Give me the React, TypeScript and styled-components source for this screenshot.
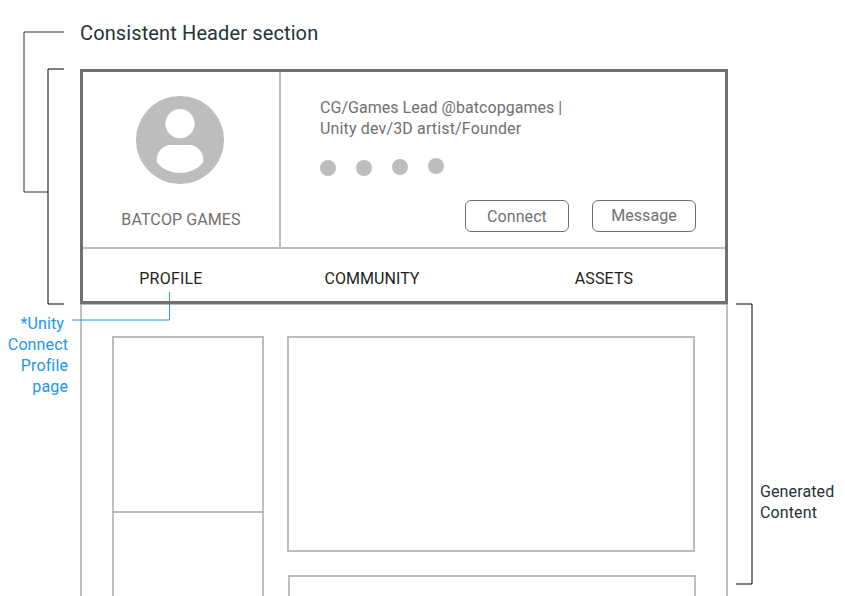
import React from "react";
import styled, { createGlobalStyle } from "styled-components";

const ink = "#263238";
const dark = "#707070";
const light = "#bdbdbd";
const blue = "#2196f3";

const GlobalStyle = createGlobalStyle`
  *, *::before, *::after { box-sizing: border-box; }
  html, body { margin: 0; background: #fff; }
  body { font: 16px/21px Roboto, "Liberation Sans", sans-serif; overflow: hidden; }
`;

const Page = styled.div`
  position: relative;
  display: grid;
  grid-template-columns: 80px 648px 1fr;
  grid-template-rows: 69px 235px 292px;
  width: 845px;
  height: 596px;
  overflow: hidden;
  background: #fff;
`;

const Title = styled.h1`
  grid-column: 2;
  grid-row: 1;
  margin: 21px 0 0;
  font-size: 20px;
  line-height: 24px;
  font-weight: 400;
  letter-spacing: 0.12px;
  color: ${ink};
`;

const Header = styled.header`
  grid-column: 2;
  grid-row: 2;
  display: flex;
  flex-direction: column;
  border: 3px solid ${dark};
`;

const Summary = styled.div`
  display: flex;
  height: 177px;
  border-bottom: 2px solid ${light};
`;

const Identity = styled.section`
  display: flex;
  flex-direction: column;
  align-items: center;
  width: 198px;
  padding: 24px 2px 0 0;
  border-right: 2px solid ${light};
`;

const Avatar = styled.svg`
  display: block;
  width: 88px;
  height: 88px;
`;

const Name = styled.div`
  margin: 25px 0 0 2px;
  letter-spacing: 0.1px;
  color: ${dark};
`;

const About = styled.section`
  flex: 1;
  display: flex;
  flex-direction: column;
  padding: 25px 29px 0 39px;
  color: ${dark};
`;

const Bio = styled.p`
  margin: 0;
`;

const BioLine = styled.span<{ $tracking: number }>`
  display: block;
  letter-spacing: ${(p) => p.$tracking}px;
`;

const Dots = styled.div`
  display: flex;
  gap: 20px;
  height: 18px;
  margin-top: 19px;
`;

const Dot = styled.span<{ $drop: number }>`
  width: 16px;
  height: 16px;
  margin-top: ${(p) => p.$drop}px;
  border-radius: 50%;
  background: ${light};
`;

const Actions = styled.div`
  display: flex;
  justify-content: flex-end;
  gap: 23px;
  margin-top: 24px;
`;

const Button = styled.button<{ $lift?: number }>`
  width: 104px;
  height: 32px;
  padding: 0 0 ${(p) => p.$lift ?? 0}px;
  border: 1px solid ${dark};
  border-radius: 6px;
  background: #fff;
  font: inherit;
  letter-spacing: 0.08px;
  color: ${dark};
`;

const Tabs = styled.nav`
  display: grid;
  grid-template-columns: 176px 226px 238px;
  justify-items: center;
  padding-top: 19px;
  color: #231f20;
`;

const Tab = styled.span<{ $tracking: number }>`
  letter-spacing: ${(p) => p.$tracking}px;
`;

const Body = styled.main`
  grid-column: 2;
  grid-row: 3;
  display: flex;
  gap: 23px;
  padding: 31px 30px 0;
  border: solid ${light};
  border-width: 1px 2px 0;
`;

const Sidebar = styled.aside`
  width: 152px;
  border: solid ${light};
  border-width: 2px 2px 0;
`;

const SidebarPanel = styled.div`
  height: 175px;
  border-bottom: 2px solid ${light};
`;

const Feed = styled.div`
  display: flex;
  flex-direction: column;
  gap: 23px;
`;

const Card = styled.article<{ $shift?: number }>`
  flex: none;
  width: 408px;
  height: 216px;
  margin-left: ${(p) => p.$shift ?? 0}px;
  border: 2px solid ${light};
`;

const ProfileNote = styled.div`
  grid-column: 1;
  grid-row: 3;
  padding: 9px 12px 0 0;
  text-align: right;
  letter-spacing: 0.12px;
  color: ${blue};

  span { display: block; }
  span:first-child { margin-right: 4px; }
`;

const ContentNote = styled.div`
  grid-column: 3;
  grid-row: 3;
  padding: 177px 0 0 32px;
  letter-spacing: 0.12px;
  color: ${ink};
`;

const Callouts = styled.svg`
  position: absolute;
  inset: 0;
  pointer-events: none;
`;

const dots = [2, 1.5, 1, 0];

const tabs = [
  { label: "PROFILE", tracking: 0.22 },
  { label: "COMMUNITY", tracking: 0.06 },
  { label: "ASSETS", tracking: 0.15 },
];

export default function App() {
  return (
    <>
      <GlobalStyle />
      <Page>
        <Title>Consistent Header section</Title>
        <Header>
          <Summary>
            <Identity>
              <Avatar viewBox="0 0 88 88" aria-hidden="true">
                <circle cx="44" cy="44" r="44" fill={light} />
                <circle cx="44" cy="27.7" r="14.6" fill="#fff" />
                <path
                  d="M35 49H53C61 49 67.3 56 67.3 63.5C67.3 65 67.2 66 66.4 67C61.5 73.2 53.5 76.8 44 76.8S26.5 73.2 21.6 67C20.8 66 20.7 65 20.7 63.5C20.7 56 27 49 35 49Z"
                  fill="#fff"
                />
              </Avatar>
              <Name>BATCOP GAMES</Name>
            </Identity>
            <About>
              <Bio>
                <BioLine $tracking={0.04}>CG/Games Lead @batcopgames |</BioLine>
                <BioLine $tracking={0.15}>Unity dev/3D artist/Founder</BioLine>
              </Bio>
              <Dots>
                {dots.map((drop) => (
                  <Dot key={drop} $drop={drop} />
                ))}
              </Dots>
              <Actions>
                <Button>Connect</Button>
                <Button $lift={1}>Message</Button>
              </Actions>
            </About>
          </Summary>
          <Tabs>
            {tabs.map((tab) => (
              <Tab key={tab.label} $tracking={tab.tracking}>
                {tab.label}
              </Tab>
            ))}
          </Tabs>
        </Header>
        <ProfileNote>
          <span>*Unity</span>
          <span>Connect</span>
          <span>Profile</span>
          <span>page</span>
        </ProfileNote>
        <Body>
          <Sidebar>
            <SidebarPanel />
          </Sidebar>
          <Feed>
            <Card />
            <Card $shift={1} />
          </Feed>
        </Body>
        <ContentNote>
          Generated
          <br />
          Content
        </ContentNote>
        <Callouts width="845" height="596" fill="none" aria-hidden="true">
          <path d="M64 32H24V192H48" stroke={ink} />
          <path d="M64 69H48V304H64" stroke="#000" />
          <path d="M736 304H752V584H736" stroke="#000" />
          <path d="M72 320H169.5V304M169.5 301V292" stroke={blue} />
        </Callouts>
      </Page>
    </>
  );
}
